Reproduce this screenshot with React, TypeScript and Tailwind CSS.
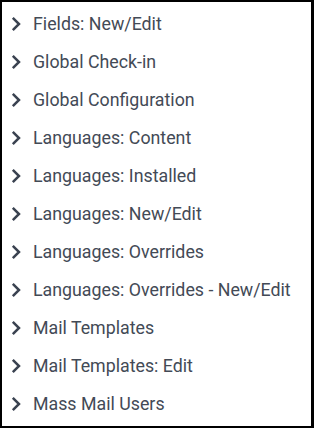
const items = [
  "Fields: New/Edit",
  "Global Check-in",
  "Global Configuration",
  "Languages: Content",
  "Languages: Installed",
  "Languages: New/Edit",
  "Languages: Overrides",
  "Languages: Overrides - New/Edit",
  "Mail Templates",
  "Mail Templates: Edit",
  "Mass Mail Users",
];

function Chevron() {
  return (
    <svg width="12" height="16" viewBox="0 0 12 16" className="shrink-0">
      <path d="M2.8 1.8 L9 8 L2.8 14.2" fill="none" stroke="#3a4250" strokeWidth="2.5" />
    </svg>
  );
}

export default function App() {
  return (
    <div className="h-[429px] w-[314px] bg-white">
      <div className="h-[428px] w-[314px] border-2 border-r-[3px] border-black bg-white pt-[3px]">
        <ul className="flex flex-col">
          {items.map((label) => (
            <li
              key={label}
              className="flex h-[38px] items-center gap-[11px] pl-[8px] font-['Roboto',sans-serif] text-[17.8px] text-[#434a56]"
            >
              <Chevron />
              <span>{label}</span>
            </li>
          ))}
        </ul>
      </div>
    </div>
  );
}
